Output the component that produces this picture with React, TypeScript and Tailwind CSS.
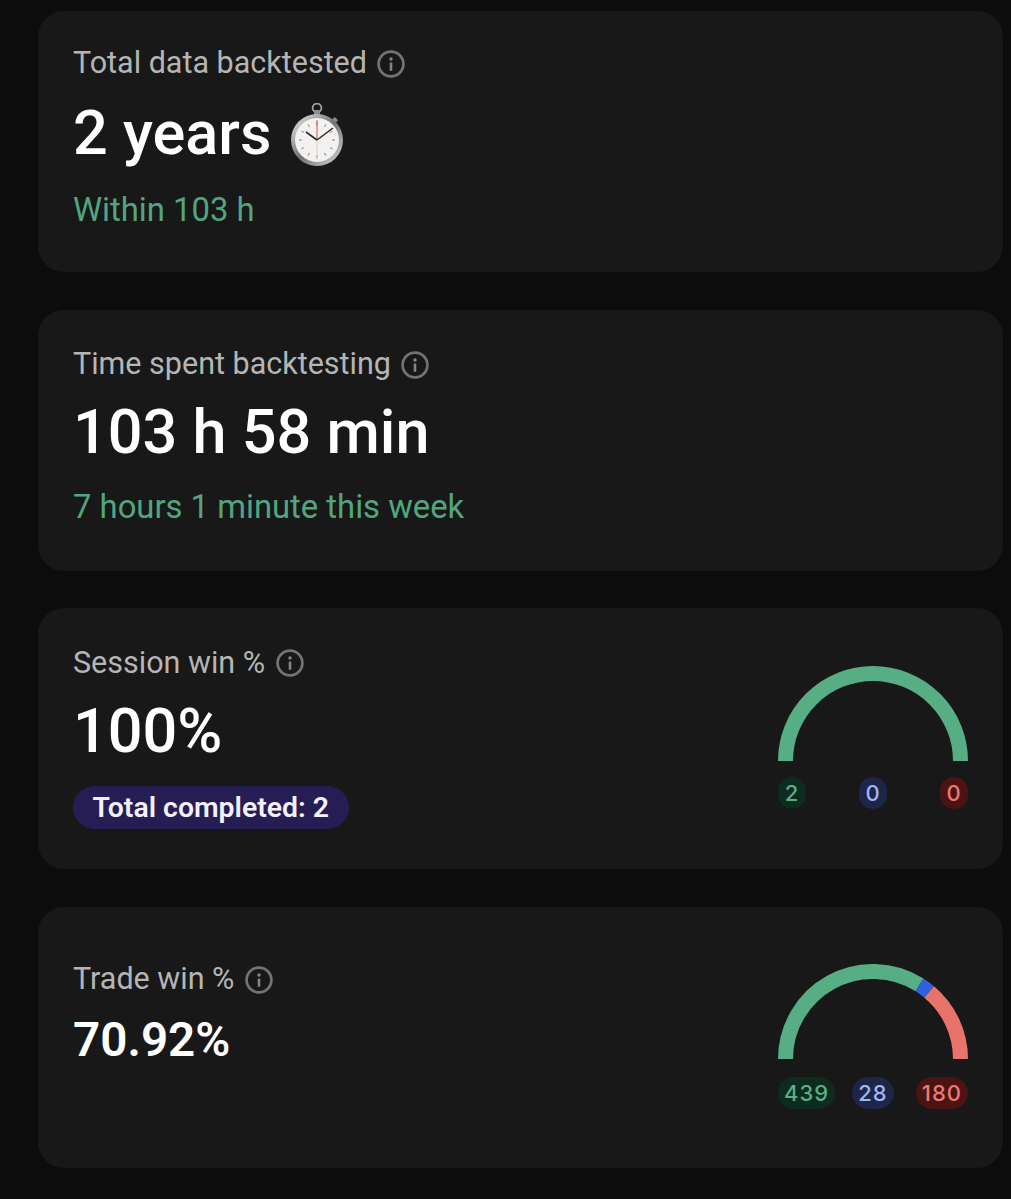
const font = "font-['Roboto',sans-serif]";

function InfoIcon({ size = 28 }: { size?: number }) {
  return (
    <svg width={size} height={size} viewBox="0 0 28 28" fill="none" className="mt-[2px] shrink-0">
      <circle cx="14" cy="14" r="12.4" stroke="#737373" strokeWidth="2.7" />
      <circle cx="14" cy="9" r="1.7" fill="#858585" />
      <rect x="12.7" y="12.4" width="2.6" height="8.4" rx="0.6" fill="#858585" />
    </svg>
  );
}

function Stopwatch() {
  const ticks = Array.from({ length: 12 }, (_, i) => i * 30);
  return (
    <svg width="56" height="64" viewBox="0 0 56 64" className="mt-[2px] shrink-0">
      <defs>
        <linearGradient id="rim" x1="0" y1="0" x2="1" y2="1">
          <stop offset="0" stopColor="#f0f0f0" />
          <stop offset="0.5" stopColor="#6f7174" />
          <stop offset="1" stopColor="#dcdcdc" />
        </linearGradient>
      </defs>
      <circle cx="26" cy="5" r="4.4" fill="none" stroke="#a0a0a0" strokeWidth="1.8" />
      <rect x="23" y="7" width="6" height="5" fill="#8e8e8e" />
      <g transform="rotate(42 26 37)">
        <rect x="23.6" y="8" width="4.8" height="5" rx="1" fill="#8a8a8a" />
      </g>
      <circle cx="26" cy="37" r="26" fill="url(#rim)" />
      <circle cx="26" cy="37" r="22" fill="#f3f2f0" />
      {ticks.map((a) => (
        <line
          key={a}
          x1="26"
          y1="19"
          x2="26"
          y2="22"
          stroke="#a4a4a4"
          strokeWidth="1.4"
          transform={`rotate(${a} 26 37)`}
        />
      ))}
      <line x1="26" y1="37" x2="26" y2="57" stroke="#c9c9c9" strokeWidth="0.8" />
      <line x1="26" y1="37" x2="26" y2="17" stroke="#c2584e" strokeWidth="1" />
      <line x1="26" y1="37" x2="42" y2="25" stroke="#2a2a2a" strokeWidth="1.5" />
      <line x1="26" y1="37" x2="15" y2="29" stroke="#2a2a2a" strokeWidth="1.7" />
    </svg>
  );
}

type Segment = { value: number; color: string };

function arcPoint(angle: number, r: number) {
  const rad = (angle * Math.PI) / 180;
  return `${95 - r * Math.cos(rad)} ${95 - r * Math.sin(rad)}`;
}

function Gauge({ segments }: { segments: Segment[] }) {
  const total = segments.reduce((sum, s) => sum + s.value, 0);
  let start = 0;
  return (
    <svg width="190" height="95" viewBox="0 0 190 95" fill="none" className="block">
      {segments.map((s) => {
        const end = start + (s.value / total) * 180;
        const d = `M ${arcPoint(start, 87.5)} A 87.5 87.5 0 0 1 ${arcPoint(end, 87.5)}`;
        start = end;
        return <path key={s.color} d={d} stroke={s.color} strokeWidth="15" />;
      })}
    </svg>
  );
}

function Pill({ children, className }: { children: string; className: string }) {
  return (
    <span
      className={`flex h-[32px] min-w-[28px] items-center justify-center rounded-full px-[6px] font-['Inter',sans-serif] text-[22px] font-medium tracking-[1px] ${className}`}
    >
      {children}
    </span>
  );
}

function GaugeBlock({ segments, counts, gap }: { segments: Segment[]; counts: string[]; gap: string }) {
  return (
    <div className={`flex w-[190px] flex-col ${gap}`}>
      <Gauge segments={segments} />
      <div className="grid grid-cols-[1fr_auto_1fr] items-center">
        <Pill className="justify-self-start bg-[#0e2b20] text-[#5aae85]">{counts[0]}</Pill>
        <Pill className="justify-self-center bg-[#1d2549] text-[#a5b4f2]">{counts[1]}</Pill>
        <Pill className="justify-self-end bg-[#4c1313] text-[#ec7a72]">{counts[2]}</Pill>
      </div>
    </div>
  );
}

function Label({ text }: { text: string }) {
  return (
    <div className="flex h-[40px] items-center gap-[10.5px] text-[30.5px] text-[#b5b5b5]">
      <span>{text}</span>
      <InfoIcon />
    </div>
  );
}

export default function App() {
  return (
    <div className={`${font} flex min-h-[1199px] flex-col gap-[37.7px] bg-[#0c0c0c] pr-[8px] pl-[38px] pt-[11px]`}>
      <section className="h-[261px] rounded-[26px] bg-[#181818] pl-[35px] pt-[32px]">
        <Label text="Total data backtested" />
        <div className="mt-[16px] flex h-[70px] items-center gap-[20px] text-[61.2px] font-medium text-white">
          <span>2 years</span>
          <Stopwatch />
        </div>
        <div className="mt-[21px] text-[32.8px] leading-[40px] text-[#52a67f]">Within 103 h</div>
      </section>

      <section className="h-[261px] rounded-[26px] bg-[#181818] pl-[35px] pt-[34px]">
        <Label text="Time spent backtesting" />
        <div className="mt-[14px] flex h-[70px] items-center text-[61.2px] font-medium text-white">103 h 58 min</div>
        <div className="mt-[19px] text-[32.8px] leading-[40px] text-[#52a67f]">7 hours 1 minute this week</div>
      </section>

      <section className="flex h-[261px] items-start justify-between rounded-[26px] bg-[#181818] pr-[35px] pl-[35px] pt-[34px]">
        <div>
          <Label text="Session win %" />
          <div className="mt-[15px] flex h-[70px] items-center text-[61.2px] font-medium text-white">100%</div>
          <div className="mt-[19px] inline-flex h-[43px] items-center rounded-full bg-[#251d54] px-[19.5px] text-[28.4px] font-semibold text-[#f2f0fa]">
            Total completed: 2
          </div>
        </div>
        <div className="pt-[24px]">
          <GaugeBlock gap="gap-[16px]" segments={[{ value: 2, color: "#57ae84" }]} counts={["2", "0", "0"]} />
        </div>
      </section>

      <section className="flex h-[261px] items-start justify-between rounded-[26px] bg-[#181818] pr-[35px] pl-[35px] pt-[52px]">
        <div>
          <Label text="Trade win %" />
          <div className="mt-[12px] flex h-[60px] items-center text-[47.6px] font-semibold text-white">70.92%</div>
        </div>
        <div className="pt-[5px]">
          <GaugeBlock
            gap="gap-[18px]"
            segments={[
              { value: 439, color: "#57ae84" },
              { value: 28, color: "#3160dd" },
              { value: 180, color: "#e8736b" },
            ]}
            counts={["439", "28", "180"]}
          />
        </div>
      </section>
    </div>
  );
}
